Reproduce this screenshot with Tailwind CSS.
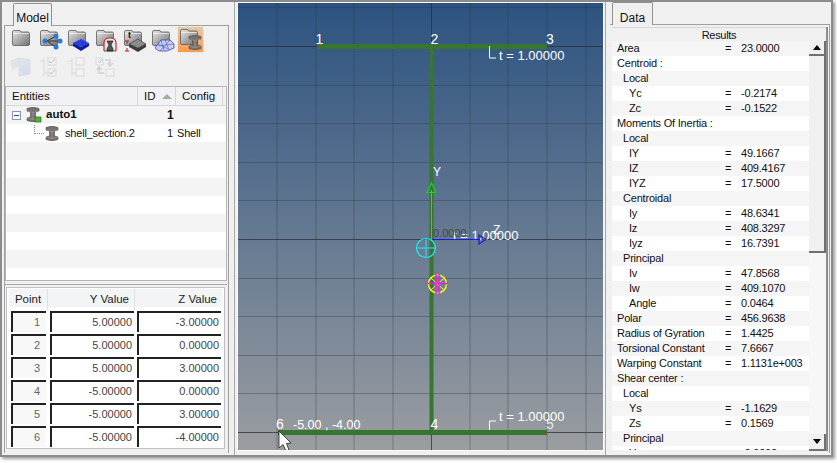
<!DOCTYPE html>
<html lang="en">
<head>
    <meta charset="UTF-8">
    <title>Section Builder</title>
    <script src="https://cdn.jsdelivr.net/npm/@tailwindcss/browser@4"></script>
</head>
<body class="bg-white w-[837px] h-[463px] overflow-hidden font-['Liberation_Sans',sans-serif] text-[11px] text-[#111]">
    <!-- shared toolbar icon parts -->
    <svg class="absolute w-0 h-0">
        <defs>
            <linearGradient id="folderFill" x1="0" y1="0" x2="1" y2="1">
                <stop offset="0" stop-color="#e8e8e8"/><stop offset="1" stop-color="#6f6f6f"/>
            </linearGradient>
            <linearGradient id="wingFill" x1="0" y1="0" x2="1" y2="1">
                <stop offset="0" stop-color="#e2e4ea"/><stop offset="1" stop-color="#c4d4ec"/>
            </linearGradient>
            <symbol id="folder" viewBox="0 0 18 16">
                <path d="M.5 2Q.5 .5 2 .5H8L9 2H16Q17.500 2 17.500 3.500V14Q17.500 15.500 16 15.500H2Q.5 15.500 .5 14Z" fill="url(#folderFill)" stroke="#5c5c5c" stroke-width=".8"/>
                <path d="M1 3.500H17" stroke="#fff" stroke-width=".6"/>
            </symbol>
            <symbol id="beam" viewBox="0 0 14 15">
                <path d="M1 1.500L7 0L13 1.500V4L9.500 5V10L13 11V13.500L7 15L1 13.500V11L4.500 10V5L1 4Z" fill="#77716f" stroke="#4b4745" stroke-width=".6"/>
                <path d="M1 4L7 5.500L13 4M1 11L7 12.500L13 11M7 5.500V12.500" fill="none" stroke="#a8a3a0" stroke-width=".6"/>
            </symbol>
            <symbol id="checks" viewBox="0 0 20 20">
                <path d="M1 4H5M5 1V19M5 16H9" fill="none" stroke="#d0d0d0"/>
                <rect x="9" y="1" width="8" height="7" fill="#f4f4f4" stroke="#cfcfcf"/>
                <rect x="9" y="12" width="8" height="7" fill="#f4f4f4" stroke="#cfcfcf"/>
            </symbol>
        </defs>
    </svg>

    <div class="flex w-[833px] h-[457px] bg-[#f0f0f0] border-2 border-[#8c8c8c] shadow-[2px_2px_3px_#9a9a9a]">
        <!-- left column -->
        <div class="w-[227px] shrink-0 flex flex-col">
            <div class="h-[23px] pl-[11px] pt-[1px]">
                <div class="w-[39px] h-[23px] relative z-10 bg-[#f0f0f0] border border-b-0 border-[#8f8f8f] rounded-t-[2px] pt-[5px] text-center text-[12px]">Model</div>
            </div>
            <div class="h-[428px] ml-[2px] border-t border-r border-l border-[#a0a0a0] flex flex-col">
                <div class="h-[60px] shrink-0 relative">
                    <div class="flex pl-[6px] pt-[3px] h-[30px]">
                        <div class="w-[28px] pt-[1px] pl-[1px]"><svg width="18" height="16"><use href="#folder"/></svg></div>
                        <div class="w-[28px] pt-[1px] pl-[1px]">
                            <svg width="24" height="24" viewBox="0 0 24 24">
                                <use href="#folder" width="18" height="16"/>
                                <path d="M7 11L16 6M7 11H21M7 11L16 17" stroke="#333" fill="none"/>
                                <circle cx="5" cy="11" r="2.500" fill="#2a78d8"/><circle cx="16" cy="6" r="2.500" fill="#2a78d8"/><circle cx="20" cy="11" r="2.500" fill="#2a78d8"/><circle cx="16" cy="17" r="2.500" fill="#2a78d8"/>
                            </svg>
                        </div>
                        <div class="w-[28px] pt-[1px] pl-[1px]">
                            <svg width="24" height="24" viewBox="0 0 24 24">
                                <use href="#folder" width="18" height="16"/>
                                <path d="M5 13L13 9L21 13L13 17Z" fill="#2a3ee8"/><path d="M5 13V16L13 21V17ZM21 13V16L13 21V17Z" fill="#101c98"/>
                            </svg>
                        </div>
                        <div class="w-[28px] pt-[1px] pl-[1px]">
                            <svg width="24" height="24" viewBox="0 0 24 24">
                                <use href="#folder" width="18" height="16"/>
                                <path d="M8 21V13Q8 8 14 8Q20 8 20 13V21" fill="#e8e8e8" stroke="#c8282a" stroke-width="1.200"/>
                                <path d="M11 11H17L15 15L17 19V21H11V19L13 15L11 11ZM8 21H20" fill="#555" stroke="#222" stroke-width=".7"/>
                            </svg>
                        </div>
                        <div class="w-[28px] pt-[1px] pl-[1px]">
                            <svg width="24" height="24" viewBox="0 0 24 24">
                                <use href="#folder" width="18" height="16"/>
                                <path d="M5 14L14 9L22 14L14 18Z" fill="#8c8c8c" stroke="#333" stroke-width=".6"/><path d="M5 14V17L14 22V18ZM22 14V17L14 22V18Z" fill="#3c3c3c"/>
                                <path d="M3 11V14M3 18V21M1 11H5M1 21H5" stroke="#b01818"/>
                                <text x="4" y="8" class="font-bold text-[9px]" fill="#111">t</text>
                            </svg>
                        </div>
                        <div class="w-[28px] pt-[1px] pl-[1px]">
                            <svg width="24" height="24" viewBox="0 0 24 24">
                                <use href="#folder" width="18" height="16"/>
                                <path d="M3 18L9 10H18L22 14V18L15 21H7Z" fill="#c8cef0" stroke="#3c48b0" stroke-width=".8"/>
                                <path d="M6 14L16 19M9 10L12 20M13 10L17 20M18 10L8 21M22 14L6 16" stroke="#4a56b8" stroke-width=".6" fill="none"/>
                            </svg>
                        </div>
                        <div class="w-[27px] h-[27px] -mt-[3px] -ml-[2px] pt-[2px] pl-[2px] border border-[#e8e8e8] bg-gradient-to-b from-[#e6c9a8] to-[#f79a4a]">
                            <svg width="24" height="24" viewBox="0 0 24 24">
                                <use href="#folder" width="18" height="16"/>
                                <use href="#beam" x="8" y="6" width="14" height="15"/>
                            </svg>
                        </div>
                    </div>
                    <div class="flex pl-[6px] pt-[1px] gap-[8px] opacity-70">
                        <svg width="20" height="20" viewBox="0 0 20 20">
                            <path d="M1 4L8 1V9L1 11ZM8 1L19 3V17L8 19V9Z" fill="url(#wingFill)" stroke="#d2d6de"/>
                            <path d="M1 11L8 9L1 15V11" fill="#e4e4e8"/>
                        </svg>
                        <svg width="20" height="20"><use href="#checks"/><path d="M10 4L12 6L16 2M10 15L12 17L16 13" stroke="#9ab0cc" fill="none"/></svg>
                        <svg width="20" height="20"><use href="#checks"/></svg>
                        <svg width="20" height="20" viewBox="0 0 20 20">
                            <rect x="1" y="1" width="7" height="7" fill="#f4f4f4" stroke="#cfcfcf"/><rect x="11" y="12" width="8" height="7" fill="#f4f4f4" stroke="#cfcfcf"/>
                            <path d="M3 4L4.500 6L7 2" stroke="#9ab0cc" fill="none"/>
                            <path d="M10 3H15V7M13 6L15 9L18 6M9 16H4V12M2 13L4 10L7 13" fill="none" stroke="#c4c4c4" stroke-width="1.500"/>
                        </svg>
                    </div>
                </div>

                <!-- entity tree -->
                <div class="h-[195px] shrink-0 mr-[1px] border border-[#b4b4b4] bg-white overflow-hidden">
                    <div class="flex h-[19px] bg-[#f0f2f5] border-b border-[#d8d8d8] text-[11.500px] leading-[19px]">
                        <div class="w-[132px] pl-[6px] border-r border-[#d8d8d8]">Entities</div>
                        <div class="w-[38px] pl-[6px] border-r border-[#d8d8d8] flex items-center gap-[6px]">ID<svg width="10" height="6"><path d="M0 6L5 1L10 6Z" fill="#a8a8a8"/></svg></div>
                        <div class="w-[47px] pl-[6px] border-r border-[#d8d8d8]">Config</div>
                    </div>
                    <div class="flex h-[18px] bg-[#f4f4f4] items-center relative">
                        <div class="w-[9px] h-[9px] ml-[6px] border border-[#8a96b0] bg-white flex items-center justify-center"><div class="w-[5px] h-[1px] bg-[#2a4a9a]"></div></div>
                        <svg class="ml-[5px] -mt-[1px]" width="16" height="16" viewBox="0 0 16 16"><use href="#beam" width="14" height="15"/><rect x="9" y="10" width="6" height="5" fill="#55b030" stroke="#2a6a18" stroke-width=".7"/></svg>
                        <span class="ml-[4px] w-[121px] font-bold text-[11.500px]">auto1</span>
                        <span class="w-[6px] font-bold text-[12px]">1</span>
                    </div>
                    <div class="flex h-[18px] bg-white items-center text-[11px] tracking-[-0.2px]">
                        <div class="ml-[28px] w-[10px] h-[9px] -mt-[7px] border-l border-b border-dotted border-[#888]"></div>
                        <svg class="ml-[1px]" width="14" height="15"><use href="#beam"/></svg>
                        <span class="ml-[6px] w-[102px] whitespace-nowrap">shell_section.2</span>
                        <span class="w-[10px]">1</span>
                        <span>Shell</span>
                    </div>
                    <div class="h-[18px] bg-[#f4f4f4]"></div>
                    <div class="h-[18px] bg-white"></div>
                    <div class="h-[18px] bg-[#f4f4f4]"></div>
                    <div class="h-[18px] bg-white"></div>
                    <div class="h-[18px] bg-[#f4f4f4]"></div>
                    <div class="h-[18px] bg-white"></div>
                    <div class="h-[18px] bg-[#f4f4f4]"></div>
                </div>
                <div class="h-[4px] shrink-0 border-b border-[#a8a8a8] mr-[1px]"></div>

                <!-- point table -->
                <div class="mt-[2px] mr-[3px] ml-[1px] h-[162px] shrink-0 border border-[#c0c0c0] bg-white px-[2px] pt-[1px] text-[11px] text-[#333]">
                    <div class="grid grid-cols-[39px_87px_87px] h-[18px] leading-[21px] text-[11.500px] bg-[#f2f4f6] text-[#222]">
                        <div class="text-center border-r border-[#e0e0e0]">Point</div>
                        <div class="text-right pr-[5px] border-r border-[#e0e0e0]">Y Value</div>
                        <div class="text-right pr-[5px]">Z Value</div>
                    </div>
                    <div class="grid grid-cols-[39px_87px_87px] auto-rows-[23px] mt-[4px] text-[#444]">
                        <div class="mx-[2px] mb-[2px] border-t-2 border-l-2 border-[#222] bg-[#f8f8f8] text-[#666] text-right pr-[6px] leading-[18px]">1</div>
                        <div class="ml-[2px] mr-[1px] mb-[2px] border-t-2 border-l-2 border-[#222] bg-white text-right pr-[2px] leading-[18px]">5.00000</div>
                        <div class="ml-[2px] mr-[1px] mb-[2px] border-t-2 border-l-2 border-[#222] bg-white text-right pr-[2px] leading-[18px]">-3.00000</div>
                        <div class="mx-[2px] mb-[2px] border-t-2 border-l-2 border-[#222] bg-[#f8f8f8] text-[#666] text-right pr-[6px] leading-[18px]">2</div>
                        <div class="ml-[2px] mr-[1px] mb-[2px] border-t-2 border-l-2 border-[#222] bg-white text-right pr-[2px] leading-[18px]">5.00000</div>
                        <div class="ml-[2px] mr-[1px] mb-[2px] border-t-2 border-l-2 border-[#222] bg-white text-right pr-[2px] leading-[18px]">0.00000</div>
                        <div class="mx-[2px] mb-[2px] border-t-2 border-l-2 border-[#222] bg-[#f8f8f8] text-[#666] text-right pr-[6px] leading-[18px]">3</div>
                        <div class="ml-[2px] mr-[1px] mb-[2px] border-t-2 border-l-2 border-[#222] bg-white text-right pr-[2px] leading-[18px]">5.00000</div>
                        <div class="ml-[2px] mr-[1px] mb-[2px] border-t-2 border-l-2 border-[#222] bg-white text-right pr-[2px] leading-[18px]">3.00000</div>
                        <div class="mx-[2px] mb-[2px] border-t-2 border-l-2 border-[#222] bg-[#f8f8f8] text-[#666] text-right pr-[6px] leading-[18px]">4</div>
                        <div class="ml-[2px] mr-[1px] mb-[2px] border-t-2 border-l-2 border-[#222] bg-white text-right pr-[2px] leading-[18px]">-5.00000</div>
                        <div class="ml-[2px] mr-[1px] mb-[2px] border-t-2 border-l-2 border-[#222] bg-white text-right pr-[2px] leading-[18px]">0.00000</div>
                        <div class="mx-[2px] mb-[2px] border-t-2 border-l-2 border-[#222] bg-[#f8f8f8] text-[#666] text-right pr-[6px] leading-[18px]">5</div>
                        <div class="ml-[2px] mr-[1px] mb-[2px] border-t-2 border-l-2 border-[#222] bg-white text-right pr-[2px] leading-[18px]">-5.00000</div>
                        <div class="ml-[2px] mr-[1px] mb-[2px] border-t-2 border-l-2 border-[#222] bg-white text-right pr-[2px] leading-[18px]">3.00000</div>
                        <div class="mx-[2px] mb-[2px] border-t-2 border-l-2 border-[#222] bg-[#f8f8f8] text-[#666] text-right pr-[6px] leading-[18px]">6</div>
                        <div class="ml-[2px] mr-[1px] mb-[2px] border-t-2 border-l-2 border-[#222] bg-white text-right pr-[2px] leading-[18px]">-5.00000</div>
                        <div class="ml-[2px] mr-[1px] mb-[2px] border-t-2 border-l-2 border-[#222] bg-white text-right pr-[2px] leading-[18px]">-4.00000</div>
                    </div>
                </div>
            </div>
        </div>

        <!-- viewport -->
        <div class="w-[6px] shrink-0 border-r border-[#a8a8a8]"></div>
        <div class="w-[3px] shrink-0"></div>
        <div class="w-[365px] h-[447px] mt-[1px] shrink-0 border-0 bg-gradient-to-b from-[#2c5380] to-[#9a9da0] outline outline-1 outline-[#fafafa]">
            <svg width="365" height="447" viewBox="238 3 365 447" class="font-['Liberation_Sans',sans-serif]">
                <g stroke="#2a3440" stroke-opacity=".35">
                    <path d="M277 3V450M316 3V450M354 3V450M393 3V450M470 3V450M508 3V450M547 3V450M586 3V450"/>
                    <path d="M238 7.500H603M238 85.500H603M238 123.500H603M238 162.500H603M238 200.500H603M238 278.500H603M238 316.500H603M238 355.500H603M238 393.500H603"/>
                </g>
                <g stroke="#2a3038" stroke-opacity=".75">
                    <path d="M431.500 3V450M238 46.500H603M238 239.500H603M238 432.500H603"/>
                </g>
                <g fill="#38752f">
                    <rect x="317" y="44" width="230" height="5"/>
                    <rect x="278" y="430" width="269" height="5"/>
                    <rect x="429.500" y="44" width="4" height="391"/>
                </g>
                <rect x="317" y="46" width="2" height="1" fill="#e01818"/>
                <rect x="278" y="431" width="2" height="1" fill="#e01818"/>
                <rect x="545" y="432" width="2" height="1" fill="#e01818"/>
                <g fill="#fff" font-size="13">
                    <text x="315.500" y="44" font-size="14">1</text>
                    <text x="430.500" y="44" font-size="14">2</text>
                    <text x="546" y="44" font-size="14">3</text>
                    <text x="276" y="429" font-size="14">6</text>
                    <text x="430.500" y="429" font-size="14">4</text>
                    <text x="546" y="429" font-size="14" fill="#e8e8e8">5</text>
                    <text x="293" y="429" font-size="12.500">-5.00 , -4.00</text>
                    <text x="499" y="60">t = 1.00000</text>
                    <text x="499" y="421">t = 1.00000</text>
                    <text x="453" y="240">t = 1.00000</text>
                    <text x="433" y="176" font-size="12">Y</text>
                    <text x="493" y="234" font-size="12">Z</text>
                </g>
                <text x="433" y="237" font-size="11" fill="#444">0.0000</text>
                <path d="M489.500 46V58H496M489.500 430V421H496" fill="none" stroke="#fff"/>
                <path d="M431.500 190V240" stroke="#22e022"/>
                <path d="M431.500 183L436 192.500H427Z" fill="none" stroke="#00e000" stroke-width="1.200"/>
                <path d="M432 239.500H480" stroke="#1a1ae0"/>
                <path d="M479 235V244L486 239.500Z" fill="none" stroke="#1a1ae0" stroke-width="1.200"/>
                <circle cx="426" cy="248" r="9.500" fill="none" stroke="#22e8f0" stroke-width="1.200"/>
                <path d="M416 248H436M426 238V258" stroke="#22e8f0"/>
                <circle cx="437.500" cy="284" r="9" fill="none" stroke="#f0f020" stroke-width="1.500"/>
                <path d="M431 278L444 290M444 278L431 290" stroke="#f0f020"/>
                <path d="M428 283.500H448M436 274V294M439 274V294" stroke="#f020e0" stroke-width="1.400"/>
                <path d="M279 431V448L283 444.500L286 451L289 450L286.500 443.500L291 443Z" fill="#fff" stroke="#222" stroke-width=".8"/>
            </svg>
        </div>
        <div class="w-[2px] shrink-0"></div>

        <!-- right column -->
        <div class="w-[5px] shrink-0 border-l border-[#a8a8a8]"></div>
        <div class="w-[221px] shrink-0 flex flex-col">
            <div class="h-[22px] pl-[2px]">
                <div class="w-[41px] h-[23px] relative z-10 bg-[#f0f0f0] border border-b-0 border-[#8f8f8f] rounded-t-[2px] pt-[6px] text-center text-[12px]">Data</div>
            </div>
            <div class="h-[429px] mr-[1px] border-t border-r border-[#a0a0a0] pt-[2px] pl-[2px]">
                <div class="w-[216px] border-r-2 border-[#8c8c8c]">
                    <div class="h-[14px] leading-[14px] bg-[#f0f0f0] border-t border-[#d8d8d8] text-center text-[11px] tracking-[-0.3px]">Results</div>
                    <div class="flex h-[410px] overflow-hidden">
                        <div class="w-[197px] h-[409px] text-[11px] tracking-[-0.2px] leading-[15px] overflow-hidden">
                            <div class="flex h-[15px] bg-[#f5f5f5]"><span class="w-[113px] pl-[5px]">Area</span><span class="w-[16px]">=</span><span>23.0000</span></div>
                            <div class="flex h-[15px] bg-white"><span class="w-[113px] pl-[5px]">Centroid :</span></div>
                            <div class="flex h-[15px] bg-[#f5f5f5]"><span class="w-[113px] pl-[11px]">Local</span></div>
                            <div class="flex h-[15px] bg-white"><span class="w-[113px] pl-[17px]">Yc</span><span class="w-[16px]">=</span><span>-0.2174</span></div>
                            <div class="flex h-[15px] bg-[#f5f5f5]"><span class="w-[113px] pl-[17px]">Zc</span><span class="w-[16px]">=</span><span>-0.1522</span></div>
                            <div class="flex h-[15px] bg-white"><span class="w-[113px] pl-[5px] whitespace-nowrap">Moments Of Inertia :</span></div>
                            <div class="flex h-[15px] bg-[#f5f5f5]"><span class="w-[113px] pl-[11px]">Local</span></div>
                            <div class="flex h-[15px] bg-white"><span class="w-[113px] pl-[17px]">IY</span><span class="w-[16px]">=</span><span>49.1667</span></div>
                            <div class="flex h-[15px] bg-[#f5f5f5]"><span class="w-[113px] pl-[17px]">IZ</span><span class="w-[16px]">=</span><span>409.4167</span></div>
                            <div class="flex h-[15px] bg-white"><span class="w-[113px] pl-[17px]">IYZ</span><span class="w-[16px]">=</span><span>17.5000</span></div>
                            <div class="flex h-[15px] bg-[#f5f5f5]"><span class="w-[113px] pl-[11px]">Centroidal</span></div>
                            <div class="flex h-[15px] bg-white"><span class="w-[113px] pl-[17px]">Iy</span><span class="w-[16px]">=</span><span>48.6341</span></div>
                            <div class="flex h-[15px] bg-[#f5f5f5]"><span class="w-[113px] pl-[17px]">Iz</span><span class="w-[16px]">=</span><span>408.3297</span></div>
                            <div class="flex h-[15px] bg-white"><span class="w-[113px] pl-[17px]">Iyz</span><span class="w-[16px]">=</span><span>16.7391</span></div>
                            <div class="flex h-[15px] bg-[#f5f5f5]"><span class="w-[113px] pl-[11px]">Principal</span></div>
                            <div class="flex h-[15px] bg-white"><span class="w-[113px] pl-[17px]">Iv</span><span class="w-[16px]">=</span><span>47.8568</span></div>
                            <div class="flex h-[15px] bg-[#f5f5f5]"><span class="w-[113px] pl-[17px]">Iw</span><span class="w-[16px]">=</span><span>409.1070</span></div>
                            <div class="flex h-[15px] bg-white"><span class="w-[113px] pl-[17px]">Angle</span><span class="w-[16px]">=</span><span>0.0464</span></div>
                            <div class="flex h-[15px] bg-[#f5f5f5]"><span class="w-[113px] pl-[5px]">Polar</span><span class="w-[16px]">=</span><span>456.9638</span></div>
                            <div class="flex h-[15px] bg-white"><span class="w-[113px] pl-[5px]">Radius of Gyration</span><span class="w-[16px]">=</span><span>1.4425</span></div>
                            <div class="flex h-[15px] bg-[#f5f5f5]"><span class="w-[113px] pl-[5px]">Torsional Constant</span><span class="w-[16px]">=</span><span>7.6667</span></div>
                            <div class="flex h-[15px] bg-white"><span class="w-[113px] pl-[5px]">Warping Constant</span><span class="w-[16px]">=</span><span>1.1131e+003</span></div>
                            <div class="flex h-[15px] bg-[#f5f5f5]"><span class="w-[113px] pl-[5px]">Shear center :</span></div>
                            <div class="flex h-[15px] bg-white"><span class="w-[113px] pl-[11px]">Local</span></div>
                            <div class="flex h-[15px] bg-[#f5f5f5]"><span class="w-[113px] pl-[17px]">Ys</span><span class="w-[16px]">=</span><span>-1.1629</span></div>
                            <div class="flex h-[15px] bg-white"><span class="w-[113px] pl-[17px]">Zs</span><span class="w-[16px]">=</span><span>0.1569</span></div>
                            <div class="flex h-[15px] bg-[#f5f5f5]"><span class="w-[113px] pl-[11px]">Principal</span></div>
                            <div class="flex h-[15px] bg-white"><span class="w-[113px] pl-[17px]">Yp</span><span class="w-[16px]">=</span><span>-0.9202</span></div>
                        </div>
                        <div class="w-[17px] flex flex-col bg-[#f7f7f7]">
                            <div class="h-[15px] bg-[#f0f0f0] border-b-2 border-r-2 border-[#707070] flex items-center justify-center"><svg width="8" height="5"><path d="M0 5L4 0L8 5Z" fill="#000"/></svg></div>
                            <div class="h-[197px] bg-[#f0f0f0] border-b-2 border-r-2 border-[#707070]"></div>
                            <div class="flex-1"></div>
                            <div class="h-[17px] bg-[#f0f0f0] border-b-2 border-r-2 border-[#707070] flex items-center justify-center"><svg width="8" height="5"><path d="M0 0H8L4 5Z" fill="#000"/></svg></div>
                        </div>
                    </div>
                </div>
            </div>
        </div>
    </div>
</body>
</html>
